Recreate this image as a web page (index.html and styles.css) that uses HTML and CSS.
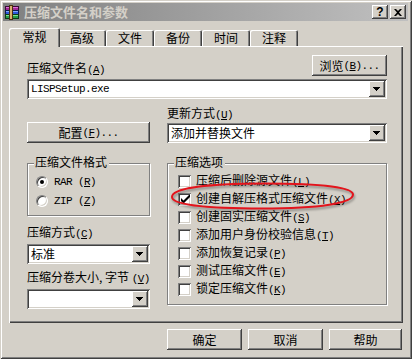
FILE: index.html
```html
<!DOCTYPE html>
<html lang="zh-CN">
<head>
<meta charset="utf-8">
<title>压缩文件名和参数</title>
<link rel="stylesheet" href="styles.css">
</head>
<body>
<div class="window">
  <div class="titlebar">
    <svg class="appicon" width="16" height="16" viewBox="0 0 16 16">
      <rect x="1.5" y="2.5" width="13" height="4" fill="#a02a96" stroke="#3a0a36"/>
      <rect x="1.5" y="6.5" width="13" height="4" fill="#2c56d8" stroke="#0a1a50"/>
      <rect x="1.5" y="10.5" width="13" height="4" fill="#26a048" stroke="#0a3a14"/>
      <rect x="2" y="3" width="12" height="1" fill="#e070d8"/>
      <rect x="2" y="7" width="12" height="1" fill="#80a8ff"/>
      <rect x="2" y="11" width="12" height="1" fill="#80e090"/>
      <rect x="5.5" y="1.5" width="3" height="14" fill="#d8b070" stroke="#4a3010"/>
    </svg>
    <span class="title">压缩文件名和参数</span>
    <div class="tbtns">
      <span class="tbtn help">?</span>
      <span class="tbtn">
        <svg width="8" height="7" viewBox="0 0 8 7"><path d="M0 0h2l2 2 2-2h2L5 3.5 8 7H6L4 5 2 7H0l3-3.5z" fill="#000"/></svg>
      </span>
    </div>
  </div>

  <div class="main">
    <div class="tabs">
      <div class="tab sel">常规</div>
      <div class="tab">高级</div>
      <div class="tab">文件</div>
      <div class="tab">备份</div>
      <div class="tab">时间</div>
      <div class="tab">注释</div>
    </div>

    <div class="panel">
      <div class="row1">
        <span class="lbl lbl-name">压缩文件名<span class="m">(<u>A</u>)</span></span>
        <span class="btn browse">浏览<span class="m">(<u>B</u>)...</span></span>
      </div>
      <div class="combo combo-name">
        <span class="val m">LISPSetup.exe</span>
        <span class="ddb"><svg width="16" height="16" viewBox="0 0 16 16"><rect x="4" y="6" width="7" height="1"/><rect x="5" y="7" width="5" height="1"/><rect x="6" y="8" width="3" height="1"/><rect x="7" y="9" width="1" height="1"/></svg></span>
      </div>

      <div class="cols">
        <div class="cell-config">
          <span class="btn config">配置<span class="m">(<u>F</u>)...</span></span>
        </div>
        <div class="cell-update">
          <span class="lbl">更新方式<span class="m">(<u>U</u>)</span></span>
          <div class="combo combo-update">
            <span class="val">添加并替换文件</span>
            <span class="ddb"><svg width="16" height="16" viewBox="0 0 16 16"><rect x="4" y="6" width="7" height="1"/><rect x="5" y="7" width="5" height="1"/><rect x="6" y="8" width="3" height="1"/><rect x="7" y="9" width="1" height="1"/></svg></span>
          </div>
        </div>

        <div class="cell-left">
          <div class="group group-format">
            <span class="gtitle">压缩文件格式</span>
            <div class="radio-row"><span class="radio on"></span><span class="m">RAR (<u>R</u>)</span></div>
            <div class="radio-row"><span class="radio"></span><span class="m">ZIP (<u>Z</u>)</span></div>
          </div>
          <span class="lbl lbl-method">压缩方式<span class="m">(<u>C</u>)</span></span>
          <div class="combo combo-small">
            <span class="val">标准</span>
            <span class="ddb"><svg width="16" height="16" viewBox="0 0 16 16"><rect x="4" y="6" width="7" height="1"/><rect x="5" y="7" width="5" height="1"/><rect x="6" y="8" width="3" height="1"/><rect x="7" y="9" width="1" height="1"/></svg></span>
          </div>
          <span class="lbl lbl-volume">压缩分卷大小, 字节 <span class="m">(<u>V</u>)</span></span>
          <div class="combo combo-small">
            <span class="val"></span>
            <span class="ddb"><svg width="16" height="16" viewBox="0 0 16 16"><rect x="4" y="6" width="7" height="1"/><rect x="5" y="7" width="5" height="1"/><rect x="6" y="8" width="3" height="1"/><rect x="7" y="9" width="1" height="1"/></svg></span>
          </div>
        </div>

        <div class="cell-right">
          <div class="group group-options">
            <span class="gtitle">压缩选项</span>
            <div class="check-row"><span class="check"></span><span>压缩后删除源文件<span class="m">(<u>L</u>)</span></span></div>
            <div class="check-row"><span class="check"><svg width="9" height="9" viewBox="0 0 9 9"><path d="M0 3v3l2 2h1l6-6V0H8L2.5 5.5z" fill="#000"/></svg></span><span>创建自解压格式压缩文件<span class="m">(<u>X</u>)</span></span></div>
            <div class="check-row"><span class="check"></span><span>创建固实压缩文件<span class="m">(<u>S</u>)</span></span></div>
            <div class="check-row"><span class="check"></span><span>添加用户身份校验信息<span class="m">(<u>T</u>)</span></span></div>
            <div class="check-row"><span class="check"></span><span>添加恢复记录<span class="m">(<u>P</u>)</span></span></div>
            <div class="check-row"><span class="check"></span><span>测试压缩文件<span class="m">(<u>E</u>)</span></span></div>
            <div class="check-row"><span class="check"></span><span>锁定压缩文件<span class="m">(<u>K</u>)</span></span></div>
          </div>
        </div>
      </div>
    </div>

    <div class="footer">
      <span class="btn fbtn">确定</span>
      <span class="btn fbtn">取消</span>
      <span class="btn fbtn help-btn">帮助</span>
    </div>
  </div>

  <svg class="mark" width="190" height="34" viewBox="0 0 190 34">
    <path d="M2 15 C2 6 40 1.5 95 1.5 C150 1.5 183 5 183 12.5 C183 21 150 26.5 92 26.5 C38 26.5 2 23 2 15 Z" fill="none" stroke="#e3141c" stroke-width="2"/>
  </svg>
</div>
</body>
</html>
```

FILE: styles.css
```css
* { box-sizing: border-box; }
html, body { margin: 0; padding: 0; }
body {
  width: 412px;
  height: 359px;
  overflow: hidden;
  background: #d4d0c8;
  color: #000;
  font: 12px/14px "Noto Sans CJK SC", "Noto Sans", sans-serif;
}
u { text-decoration: underline; text-underline-offset: 1px; }
.m {
  font-family: "Liberation Mono", "Noto Sans CJK SC", monospace;
  font-size: 11px;
  letter-spacing: -0.6px;
}

.window {
  position: relative;
  width: 412px;
  height: 359px;
  background: #d4d0c8;
  padding: 3px 4px 0 3px;
  box-shadow: inset 1px 1px #d4d0c8, inset -1px -1px #404040, inset 2px 2px #fff, inset -2px -2px #808080;
}

/* title bar */
.titlebar {
  height: 18px;
  display: flex;
  align-items: center;
  padding: 0 2px 0 1px;
  background: linear-gradient(to right, #808080, #c0c0c0);
}
.appicon { flex: none; margin-right: 4px; }
.title {
  flex: 1;
  color: #d4d0c8;
  font-weight: bold;
  font-size: 13px;
  line-height: 18px;
}
.tbtns { display: flex; gap: 2px; }
.tbtn {
  width: 16px;
  height: 14px;
  display: flex;
  align-items: center;
  justify-content: center;
  background: #d4d0c8;
  box-shadow: inset -1px -1px #404040, inset 1px 1px #fff, inset -2px -2px #808080;
}
.tbtn.help {
  font: bold 12px/14px "Liberation Sans", sans-serif;
}

/* main area */
.main { padding: 7px 5px 0 6px; }

.tabs {
  height: 18px;
  display: flex;
  align-items: flex-end;
  padding-left: 2px;
}
.tab {
  width: 48px;
  height: 16px;
  text-align: center;
  line-height: 14px;
  padding-top: 1px;
  background: #d4d0c8;
  border-top-left-radius: 2px;
  border-top-right-radius: 2px;
  box-shadow: inset 1px 1px #fff, inset -1px 0 #404040, inset -2px 0 #808080;
}
.tab.sel {
  position: relative;
  z-index: 1;
  width: 51px;
  height: 19px;
  margin: 0 -2px -1px -2px;
  padding-top: 2px;
  box-shadow: inset 1px 1px #fff, inset -1px 0 #404040, inset -2px 0 #808080;
}

.panel {
  height: 277px;
  padding: 9px 16px 0 18px;
  box-shadow: inset 1px 1px #fff, inset -1px -1px #404040, inset -2px -2px #808080;
}

.btn {
  display: flex;
  align-items: center;
  justify-content: center;
  height: 21px;
  background: #d4d0c8;
  box-shadow: inset -1px -1px #404040, inset 1px 1px #fff, inset -2px -2px #808080;
}

.row1 {
  height: 21px;
  display: flex;
  justify-content: space-between;
  align-items: flex-end;
}
.lbl { display: block; }
.lbl-name { margin-bottom: -1px; }
.browse { width: 75px; }

.combo {
  height: 20px;
  display: flex;
  padding: 2px;
  background: #fff;
  box-shadow: inset 1px 1px #808080, inset -1px -1px #fff, inset 2px 2px #404040, inset -2px -2px #d4d0c8;
}
.combo .val {
  flex: 1;
  line-height: 16px;
  padding-left: 2px;
  white-space: nowrap;
}
.ddb {
  width: 16px;
  height: 16px;
  background: #d4d0c8;
  box-shadow: inset -1px -1px #404040, inset 1px 1px #fff, inset -2px -2px #808080;
}
.ddb svg { display: block; }
.combo-name { margin-top: 3px; }
.combo-name .val { padding-left: 2px; }

.cols {
  margin-top: 7px;
  display: grid;
  grid-template-columns: 123px 220px;
  column-gap: 17px;
  row-gap: 20px;
}
.cell-config { display: flex; align-items: flex-end; }
.config { width: 123px; }
.combo-update { margin-top: 1px; }

.group {
  border: 1px solid #808080;
  box-shadow: inset 1px 1px #fff, 1px 1px #fff;
}
.gtitle {
  display: table;
  margin: -9px 0 3px 6px;
  padding: 0 2px 0 1px;
  background: #d4d0c8;
}
.group-format { height: 53px; }
.radio-row {
  height: 19px;
  display: flex;
  align-items: center;
  padding-left: 8px;
  gap: 6px;
}
.radio {
  position: relative;
  width: 12px;
  height: 12px;
  border-radius: 50%;
  background: #fff;
  border: 1px solid;
  border-color: #808080 #fff #fff #808080;
  box-shadow: inset 1px 1px 0 #404040, inset -1px -1px 0 #d4d0c8;
}
.radio.on::after {
  content: "";
  position: absolute;
  left: 3px;
  top: 3px;
  width: 4px;
  height: 4px;
  border-radius: 50%;
  background: #000;
}
.lbl-method { margin-top: 9px; }
.lbl-volume { margin-top: 6px; }
.combo-small { margin-top: 3px; }

.group-options { height: 142px; }
.check-row {
  height: 18px;
  display: flex;
  align-items: center;
  padding-left: 10px;
  gap: 5px;
  white-space: nowrap;
}
.check {
  flex: none;
  width: 13px;
  height: 13px;
  display: flex;
  align-items: center;
  justify-content: center;
  background: #fff;
  box-shadow: inset 1px 1px #808080, inset -1px -1px #fff, inset 2px 2px #404040, inset -2px -2px #d4d0c8;
}
.check svg { display: block; margin: 1px 0 0 1px; }

.footer {
  margin-top: 6px;
  display: flex;
  justify-content: flex-end;
  gap: 6px;
  padding-right: 1px;
}
.fbtn { width: 75px; }
.fbtn.help-btn { width: 73px; }

.mark {
  position: absolute;
  left: 170px;
  top: 182px;
  filter: drop-shadow(1px 2px 1px rgba(0, 0, 0, 0.35));
}
```
